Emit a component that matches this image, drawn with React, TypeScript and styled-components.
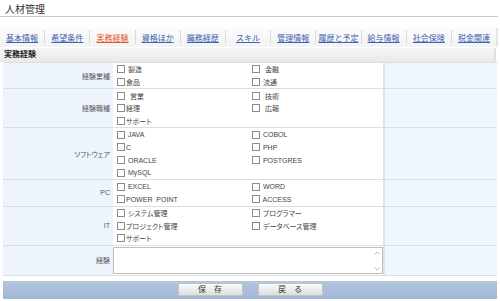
import React from 'react'
import styled, { createGlobalStyle } from 'styled-components'

const GlobalStyle = createGlobalStyle`
  html, body {
    margin: 0;
    padding: 0;
    background: #fff;
  }
  body {
    font-family: 'Liberation Sans', 'Noto Sans CJK JP', sans-serif;
    color: #333;
  }
`

const Page = styled.div`
  width: 500px;
  height: 301px;
  overflow: hidden;
`

const TitleBar = styled.div`
  height: 14px;
  margin-right: 2px;
  padding: 2px 0 0 5px;
  border-bottom: 1px solid #c9c9c9;
  font-size: 10px;
  line-height: 15px;
  color: #333;
`

const TabBar = styled.div`
  display: flex;
  width: 498px;
  margin-top: 11px;
  padding: 2px 0 3px;
  background: linear-gradient(#fbfbfb, #f3f3f3);
  border-right: 2px solid #e6e6e6;
  box-sizing: border-box;
  height: 19px;
`

const Tab = styled.a<{ active?: boolean }>`
  flex: 1;
  display: flex;
  align-items: center;
  justify-content: center;
  height: 14px;
  border-right: 1px solid #dadada;
  font-size: 8px;
  color: ${({ active }) => (active ? '#e5532c' : '#4062b0')};
  text-decoration: underline;
  cursor: pointer;

  &:last-child {
    border-right: none;
  }
`

const SectionHead = styled.div`
  width: 496px;
  height: 14px;
  margin-top: 1px;
  padding-left: 4px;
  box-sizing: border-box;
  background: linear-gradient(#f5f5f5, #e9e9e9);
  border-right: 2px solid #e0e0e0;
  font-size: 8px;
  font-weight: bold;
  line-height: 14px;
  color: #222;
`

const Table = styled.div`
  width: 494px;
  margin: 0 3px;
  border-top: 1px solid #dddddd;
  border-bottom: 1px solid #dddddd;
  font-feature-settings: 'palt';
`

const Row = styled.div`
  display: grid;
  grid-template-columns: 110px 134px 136px 1fr;
  border-bottom: 1px solid #dedede;

  &:last-child {
    border-bottom: none;
  }
`

const LabelCell = styled.div`
  display: flex;
  align-items: center;
  justify-content: flex-end;
  padding-right: 3px;
  background: #edf4fc;
  font-size: 7px;
  color: #5a5a5a;
`

const ChoiceCol = styled.div<{ right?: boolean }>`
  display: flex;
  flex-direction: column;
  padding-left: ${({ right }) => (right ? '5px' : '4px')};
  background: #fff;
`

const SpareCell = styled.div`
  grid-column: 4;
  background: #eef6fe;
  border-left: 2px solid #e2e2e2;
`

const Choice = styled.label`
  display: flex;
  align-items: center;
  gap: 1px;
  height: 12.7px;
  font-size: 7px;
  color: #444;
  white-space: pre;
`

const Box = styled.input`
  appearance: none;
  width: 8px;
  height: 8px;
  margin: 0;
  border: 1px solid #8c8c8c;
  background: #fff;
  flex-shrink: 0;
  box-sizing: border-box;
`

const NoteCell = styled.div`
  grid-column: 2 / 4;
  display: flex;
  height: 25px;
  margin: 1px 0;
  border: 1px solid #bfbfbf;
  background: #fff;
`

const Note = styled.textarea`
  flex: 1;
  border: none;
  outline: none;
  resize: none;
  overflow: hidden;
  padding: 2px;
  font: 7px 'Liberation Sans', 'Noto Sans CJK JP', sans-serif;
`

const ScrollRail = styled.div`
  display: flex;
  flex-direction: column;
  justify-content: space-between;
  align-items: center;
  width: 8px;
  padding: 3px 1px 2px 0;
`

const ButtonBar = styled.div`
  display: flex;
  justify-content: center;
  align-items: center;
  gap: 15px;
  width: 494px;
  height: 18px;
  margin: 5px 3px 0;
  background: linear-gradient(#b3c6e0, #a1b7d5);
`

const Button = styled.button`
  width: 65px;
  height: 13px;
  padding: 0;
  border: 1px solid #c3c3c3;
  background: linear-gradient(#fbfbfb, #dedede);
  font: 8px 'Liberation Sans', 'Noto Sans CJK JP', sans-serif;
  color: #333;
  line-height: 11px;
  white-space: pre;
`

const tabs = ['基本情報', '希望条件', '実務経験', '資格ほか', '職務経歴', 'スキル', '管理情報', '履歴と予定', '給与情報', '社会保険', '税金関連']

type Group = { label: string; left: string[]; right: string[] }

const groups: Group[] = [
  { label: '経験業種', left: [' 製造', '食品'], right: ['  金融', ' 流通'] },
  { label: '経験職種', left: ['  営業', '経理', 'サポート'], right: ['  技術', '  広報'] },
  { label: 'ソフトウェア', left: [' JAVA', 'C', ' ORACLE', ' MySQL'], right: [' COBOL', ' PHP', ' POSTGRES'] },
  { label: 'PC', left: [' EXCEL', 'POWER  POINT'], right: [' WORD', ' ACCESS'] },
  { label: 'IT', left: [' システム管理', 'プロジェクト管理', 'サポート'], right: [' プログラマー', ' データベース管理'] },
]

function Chevron({ up }: { up?: boolean }) {
  return (
    <svg width="6" height="4" viewBox="0 0 6 4">
      <path d={up ? 'M0.5 3.5 L3 1 L5.5 3.5' : 'M0.5 0.5 L3 3 L5.5 0.5'} fill="none" stroke="#a8a8a8" strokeWidth="0.8" />
    </svg>
  )
}

function ChoiceList({ items, right }: { items: string[]; right?: boolean }) {
  return (
    <ChoiceCol right={right}>
      {items.map((item) => (
        <Choice key={item}>
          <Box type="checkbox" />
          <span>{item}</span>
        </Choice>
      ))}
    </ChoiceCol>
  )
}

export default function App() {
  return (
    <Page>
      <GlobalStyle />
      <TitleBar>人材管理</TitleBar>
      <TabBar>
        {tabs.map((t) => (
          <Tab key={t} active={t === '実務経験'}>
            {t}
          </Tab>
        ))}
      </TabBar>
      <SectionHead>実務経験</SectionHead>
      <Table>
        {groups.map((g) => (
          <Row key={g.label}>
            <LabelCell>{g.label}</LabelCell>
            <ChoiceList items={g.left} />
            <ChoiceList items={g.right} right />
            <SpareCell />
          </Row>
        ))}
        <Row>
          <LabelCell>経験</LabelCell>
          <NoteCell>
            <Note />
            <ScrollRail>
              <Chevron up />
              <Chevron />
            </ScrollRail>
          </NoteCell>
          <SpareCell />
        </Row>
      </Table>
      <ButtonBar>
        <Button>保　存</Button>
        <Button>戻　る</Button>
      </ButtonBar>
    </Page>
  )
}
